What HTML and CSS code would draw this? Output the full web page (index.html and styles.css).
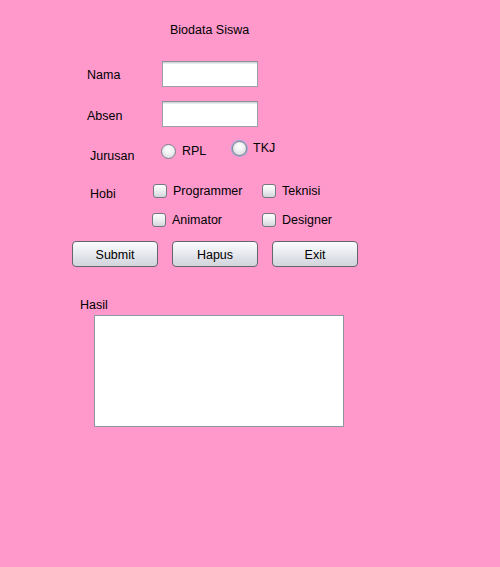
FILE: index.html
```html
<!DOCTYPE html>
<html>
<head>
<meta charset="utf-8">
<title>Biodata Siswa</title>
<link rel="stylesheet" href="styles.css">
</head>
<body>
<div class="form">
  <div class="title">Biodata Siswa</div>

  <div class="field-row row-nama">
    <span class="label">Nama</span>
    <input class="text-field" type="text">
  </div>
  <div class="field-row row-absen">
    <span class="label">Absen</span>
    <input class="text-field" type="text">
  </div>

  <div class="choice-row row-jurusan">
    <span class="label label-jurusan">Jurusan</span>
    <span class="radio radio-rpl"><span class="radio-dot"></span><span>RPL</span></span>
    <span class="radio radio-tkj"><span class="radio-dot focused"></span><span>TKJ</span></span>
  </div>

  <div class="choice-row row-hobi">
    <span class="label label-hobi">Hobi</span>
    <div class="hobi-grid">
      <span class="check"><span class="check-box"></span><span>Programmer</span></span>
      <span class="check"><span class="check-box"></span><span>Teknisi</span></span>
      <span class="check shift-left"><span class="check-box"></span><span>Animator</span></span>
      <span class="check"><span class="check-box"></span><span>Designer</span></span>
    </div>
  </div>

  <div class="button-row">
    <button class="btn">Submit</button>
    <button class="btn">Hapus</button>
    <button class="btn">Exit</button>
  </div>

  <div class="hasil-label">Hasil</div>
  <textarea class="hasil"></textarea>
</div>
</body>
</html>
```

FILE: styles.css
```css
* { box-sizing: border-box; }

html, body {
  margin: 0;
  padding: 0;
  width: 500px;
  height: 567px;
  background: #ff99cc;
  overflow: hidden;
}

body {
  font-family: "Liberation Sans", Arial, sans-serif;
  font-size: 12.5px;
  color: #000;
  line-height: 16px;
}

.form {
  padding-top: 22px;
}

.title {
  margin-left: 170px;
  height: 16px;
}

.field-row {
  display: flex;
  align-items: center;
  padding-left: 87px;
  height: 26px;
}

.row-nama { margin-top: 23px; }
.row-absen { margin-top: 14px; }

.field-row .label {
  width: 75px;
  padding-top: 1px;
}

.row-absen .label {
  padding-top: 3px;
}

.text-field {
  width: 96px;
  height: 26px;
  margin: 0;
  padding: 0 4px;
  border: 1px solid #9aa1a8;
  border-top-color: #8a9299;
  background: #fff;
  box-shadow: inset 0 1px 0 #d3d7da, inset 0 2px 0 #e8eaec;
  font: inherit;
  outline: none;
}

.choice-row {
  display: flex;
  align-items: flex-start;
}

.row-jurusan {
  margin-top: 13px;
  height: 23px;
}

.label-jurusan {
  margin-left: 90px;
  margin-top: 8px;
  width: 71px;
}

.radio {
  display: flex;
  align-items: center;
  gap: 6px;
  height: 16px;
}

.radio-rpl {
  margin-top: 3px;
  width: 71px;
}

.radio-tkj {
  margin-top: 0;
}

.radio-dot {
  width: 15px;
  height: 15px;
  border-radius: 50%;
  border: 1px solid #7b828b;
  background: radial-gradient(circle at 50% 35%, #ffffff 0%, #f1f2f4 40%, #cdd1d7 100%);
}

.radio-dot.focused {
  box-shadow: 0 0 0 1px #8db0dc;
}

.row-hobi {
  margin-top: 20px;
}

.label-hobi {
  margin-left: 90px;
  margin-top: 3px;
  width: 63px;
}

.hobi-grid {
  display: grid;
  grid-template-columns: 109px auto;
  row-gap: 13px;
}

.check {
  display: flex;
  align-items: center;
  gap: 6px;
  height: 16px;
}

.shift-left {
  margin-left: -1px;
}

.check-box {
  width: 14px;
  height: 14px;
  border-radius: 3px;
  border: 1px solid #727880;
  background: linear-gradient(#fdfdfd, #eceef0 50%, #d3d6db);
}

.button-row {
  display: flex;
  gap: 14px;
  padding-left: 72px;
  margin-top: 13px;
}

.btn {
  width: 86px;
  height: 26px;
  margin: 0;
  padding: 2px 0 0;
  border: 1px solid #62676e;
  border-radius: 4px;
  background: linear-gradient(#fbfcfd, #e9ebef 45%, #dcdfe5 70%, #d2d6dc);
  font: inherit;
  color: #000;
}

.hasil-label {
  margin-top: 30px;
  margin-left: 80px;
  height: 16px;
}

.hasil {
  display: block;
  margin: 2px 0 0 94px;
  width: 250px;
  height: 112px;
  border: 1px solid #8b97a3;
  background: #fff;
  resize: none;
  outline: none;
  font: inherit;
  padding: 0;
}
```
